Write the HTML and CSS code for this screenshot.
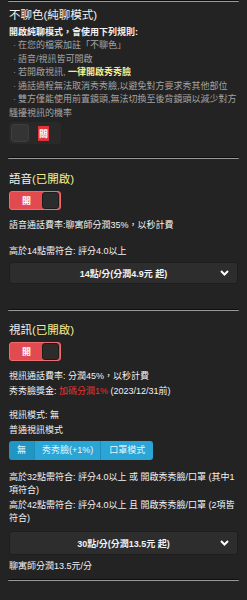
FILE: index.html
```html
<!DOCTYPE html>
<html lang="zh-Hant">
<head>
  <meta charset="UTF-8">
  <title>通話設定</title>
  <link rel="stylesheet" href="styles.css">
</head>
<body>
  <hr class="line top-line">

  <div class="section first">
    <h2 class="title">不聊色(純聊模式)</h2>
    <p class="lead">開啟純聊模式，會使用下列規則:</p>
    <ul class="rules">
      <li>在您的檔案加註「不聊色」</li>
      <li>語音/視訊皆可開啟</li>
      <li>若開啟視訊, <b class="hl">一律開啟秀秀臉</b></li>
      <li>通話過程無法取消秀秀臉,以避免對方要求秀其他部位</li>
      <li>雙方僅能使用前置鏡頭,無法切換至後背鏡頭以減少對方騷擾視訊的機率</li>
    </ul>
    <div class="toggle off">
      <span class="knob"></span>
      <span class="label">關</span>
    </div>
  </div>

  <hr class="line">

  <div class="section">
    <h2 class="title">語音<span class="hl">(已開啟)</span></h2>
    <div class="toggle on">
      <span class="label">開</span>
      <span class="knob"></span>
    </div>
    <p class="row first-row">語音通話費率:聊寓師分潤35%，以秒計費</p>
    <p class="row big-gap">高於14點需符合: 評分4.0以上</p>
    <div class="select">
      <span>14點/分(分潤4.9元 起)</span>
      <svg class="chev" width="9" height="6" viewBox="0 0 9 6"><path d="M1 1l3.5 3.5L8 1" fill="none" stroke="#fff" stroke-width="2"/></svg>
    </div>
  </div>

  <hr class="line">

  <div class="section last">
    <h2 class="title">視訊<span class="hl">(已開啟)</span></h2>
    <div class="toggle on">
      <span class="label">開</span>
      <span class="knob"></span>
    </div>
    <p class="row first-row">視訊通話費率: 分潤45%，以秒計費</p>
    <p class="row">秀秀臉獎金: <span class="red">加碼分潤1%</span> (2023/12/31前)</p>
    <p class="row mid-gap">視訊模式: 無</p>
    <p class="row">普通視訊模式</p>
    <div class="btn-group">
      <span class="btn active">無</span>
      <span class="btn">秀秀臉(+1%)</span>
      <span class="btn">口罩模式</span>
    </div>
    <p class="row mid-gap">高於32點需符合: 評分4.0以上 或 開啟秀秀臉/口罩 (其中1項符合)</p>
    <p class="row">高於42點需符合: 評分4.0以上 且 開啟秀秀臉/口罩 (2項皆符合)</p>
    <div class="select tall">
      <span>30點/分(分潤13.5元 起)</span>
      <svg class="chev" width="9" height="6" viewBox="0 0 9 6"><path d="M1 1l3.5 3.5L8 1" fill="none" stroke="#fff" stroke-width="2"/></svg>
    </div>
    <p class="row">聊寓師分潤13.5元/分</p>
  </div>

  <hr class="line">
</body>
</html>
```

FILE: styles.css
```css
body {
  font-family: "Liberation Sans", "Noto Sans CJK TC", sans-serif;
  background-color: #232323;
  color: #f2f2f2;
  margin: 0;
  padding: 0 8px;
  font-size: 9px;
}

p {
  margin: 0;
}

.line {
  margin: 0;
  border: none;
  border-top: 1px solid #0e0e0e;
  border-bottom: 1px solid #9a9a9a;
  border-radius: 1px;
  width: 231px;
}

.section {
  padding: 11px 0 25px 1px;
}

.section.first {
  padding-top: 4px;
  padding-bottom: 13px;
}

.section.last {
  padding-top: 10px;
  padding-bottom: 6px;
}

.title {
  font-size: 11.5px;
  font-weight: normal;
  margin: 0;
  line-height: 18px;
}

.hl {
  color: #f3ec8e;
}

.red {
  color: #e8322f;
}

.lead {
  line-height: 13px;
  margin-top: 2px;
  font-weight: bold;
}

.rules {
  list-style: none;
  margin: 0 0 2px 0;
  padding: 0;
  color: #a3a3a3;
  line-height: 13.5px;
}

.rules li::before {
  content: "·";
  display: inline-block;
  width: 5px;
  padding-left: 4px;
  color: #8a8a8a;
}

.toggle {
  display: flex;
  align-items: center;
  width: 52px;
  height: 19px;
  border-radius: 3px;
  box-sizing: border-box;
  padding: 1px;
  margin-top: 3px;
}

.toggle .knob {
  width: 17px;
  height: 17px;
  border-radius: 3px;
  background-color: #2c2c2c;
  box-sizing: border-box;
  border: 1px solid #1c1c1c;
}

.toggle .label {
  flex: 1;
  text-align: center;
  font-weight: bold;
}

.toggle.off {
  background-color: #292929;
  height: 22px;
  padding: 2px;
  margin-top: 0;
}

.toggle.off .knob {
  width: 18px;
  height: 18px;
  background-color: #343434;
  border-color: #3e3e3e;
}

.toggle.off .label {
  flex: none;
  margin-left: 9px;
  color: #fff;
  background-color: #e0333c;
  padding: 1px 1px;
}

.toggle.on {
  background-color: #e14a4e;
  border: 1px solid #f06b6e;
  color: #fff;
}

.row {
  line-height: 13px;
  margin-top: 2px;
}

.row.first-row {
  margin-top: 9px;
}

.row.big-gap {
  margin-top: 13px;
}

.row.mid-gap {
  margin-top: 11px;
}

.select {
  display: flex;
  align-items: center;
  justify-content: center;
  position: relative;
  height: 22px;
  margin: 4px 0 0 0;
  background-color: #2d2d2d;
  border: 1px solid #1e1e1e;
  border-radius: 3px;
  font-weight: bold;
  width: 229px;
  box-sizing: border-box;
}

.select.tall {
  height: 24px;
  margin: 6px 0 5px 0;
}

.chev {
  position: absolute;
  right: 8px;
  top: 50%;
  margin-top: -3px;
}

.btn-group {
  display: flex;
  margin-top: 4px;
}

.btn {
  background-color: #2aa5d6;
  color: #e8f6fc;
  height: 19px;
  line-height: 19px;
  padding: 0 8px;
  border-right: 1px solid #1f8db9;
}

.btn:first-child {
  border-radius: 3px 0 0 3px;
}

.btn:nth-child(2) {
  padding: 0 7px;
}

.btn:last-child {
  border-radius: 0 3px 3px 0;
  border-right: none;
}

.btn.active {
  background-color: #2195c4;
}
```
